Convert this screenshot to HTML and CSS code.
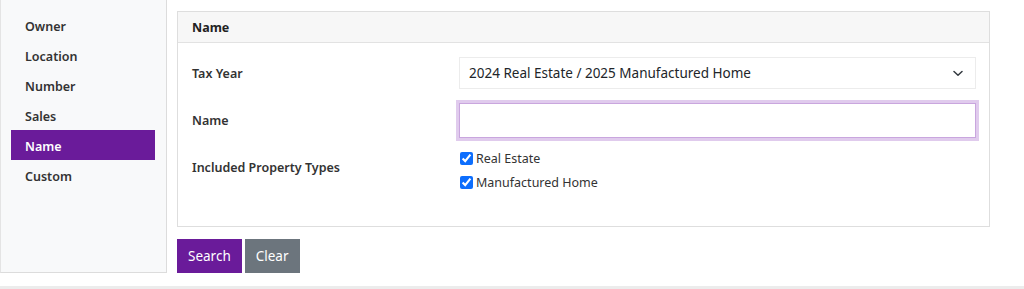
FILE: index.html
```html
<!DOCTYPE html>
<html lang="en">
<head>
<meta charset="utf-8">
<title>Property Search - Name</title>
<link rel="stylesheet" href="styles.css">
</head>
<body>
<div class="layout">
  <nav class="sidebar">
    <a class="nav-item" href="#">Owner</a>
    <a class="nav-item" href="#">Location</a>
    <a class="nav-item" href="#">Number</a>
    <a class="nav-item" href="#">Sales</a>
    <a class="nav-item active" href="#">Name</a>
    <a class="nav-item" href="#">Custom</a>
  </nav>
  <main class="main">
    <section class="panel">
      <div class="panel-header">Name</div>
      <div class="panel-body">
        <div class="form-row">
          <label class="form-label" for="taxyear">Tax Year</label>
          <div class="select-wrap">
            <select id="taxyear" class="form-select">
              <option>2024 Real Estate / 2025 Manufactured Home</option>
            </select>
            <svg class="chevron" width="10" height="7" viewBox="0 0 10 7" aria-hidden="true"><path d="M1 1.5 5 5.3 9 1.5" fill="none" stroke="#343a40" stroke-width="1.5" stroke-linecap="round" stroke-linejoin="round"/></svg>
          </div>
        </div>
        <div class="form-row">
          <label class="form-label" for="name">Name</label>
          <input id="name" class="form-input" type="text">
        </div>
        <div class="form-row row-checks">
          <span class="form-label label-top">Included Property Types</span>
          <div class="checks">
            <label class="check"><input type="checkbox" checked> Real Estate</label>
            <label class="check"><input type="checkbox" checked> Manufactured Home</label>
          </div>
        </div>
      </div>
    </section>
    <div class="actions">
      <button class="btn btn-primary" type="button">Search</button>
      <button class="btn btn-secondary" type="button">Clear</button>
    </div>
  </main>
</div>
<div class="footer-band"></div>
</body>
</html>
```

FILE: styles.css
```css
* { box-sizing: border-box; }
html, body { margin: 0; padding: 0; background: #fff; }
body {
  font-family: "Noto Sans", "Open Sans", "Liberation Sans", sans-serif;
  color: #212529;
  font-size: 13px;
}
.layout {
  display: flex;
  align-items: flex-start;
}
.sidebar {
  width: 167px;
  height: 273px;
  background: #f8f9fa;
  border-right: 1px solid #dcdcdc;
  border-bottom: 1px solid #dcdcdc;
  border-left: 1px solid #e4e4e4;
  padding: 10px 11px 0 10px;
  display: flex;
  flex-direction: column;
  flex-shrink: 0;
}
.nav-item {
  display: block;
  height: 30px;
  line-height: 27px;
  padding: 3px 0 0 14px;
  color: #333;
  font-weight: 600;
  font-size: 12.5px;
  text-decoration: none;
}
.nav-item.active {
  background: #6a1b9a;
  color: #fff;
}
.main {
  padding: 11px 0 0 10px;
  width: 823px;
}
.panel {
  border: 1px solid #dedede;
  background: #fff;
}
.panel-header {
  height: 31px;
  line-height: 31px;
  background: #f7f7f7;
  border-bottom: 1px solid #e2e2e2;
  padding-left: 14px;
  font-weight: 700;
  font-size: 12.5px;
  color: #222;
}
.panel-body {
  padding: 14px 13px 34px 14px;
  display: flex;
  flex-direction: column;
  gap: 14px;
}
.form-row {
  display: grid;
  grid-template-columns: 267px 1fr;
  align-items: center;
}
.row-checks {
  align-items: start;
  margin-top: -3px;
}
.form-label {
  font-weight: 600;
  font-size: 12.5px;
  color: #333;
}
.label-top {
  margin-top: 10px;
}
.select-wrap {
  position: relative;
}
.form-select {
  appearance: none;
  -webkit-appearance: none;
  width: 100%;
  height: 32px;
  border: 1px solid #ececec;
  border-radius: 0;
  background: #fff;
  padding: 0 30px 0 9px;
  font-family: inherit;
  font-size: 13.5px;
  color: #212529;
  outline: none;
}
.chevron {
  position: absolute;
  right: 13px;
  top: 13px;
  pointer-events: none;
}
.form-input {
  width: 100%;
  height: 35px;
  border: 1px solid #c9a6de;
  box-shadow: 0 0 0 3px #e0cbed;
  border-radius: 0;
  outline: none;
  font-family: inherit;
  font-size: 13.5px;
  padding: 0 9px;
}
.checks {
  display: flex;
  flex-direction: column;
  gap: 5px;
}
.check {
  display: flex;
  align-items: center;
  gap: 3px;
  font-size: 12.5px;
  color: #333;
  height: 19px;
}
.check input {
  width: 13px;
  height: 13px;
  margin: 0 0 0 1px;
  accent-color: #0d6efd;
}
.actions {
  display: flex;
  gap: 3px;
  margin-top: 12px;
}
.btn {
  height: 34px;
  border: 1px solid transparent;
  border-radius: 0;
  padding: 0 10px;
  font-family: inherit;
  font-size: 13.5px;
  color: #fff;
  cursor: pointer;
}
.btn-primary { background: #6a1b9a; border-color: #6a1b9a; }
.btn-secondary { background: #6c757d; border-color: #6c757d; }
.footer-band {
  margin-top: 13px;
  height: 10px;
  background: #ececec;
}
```
